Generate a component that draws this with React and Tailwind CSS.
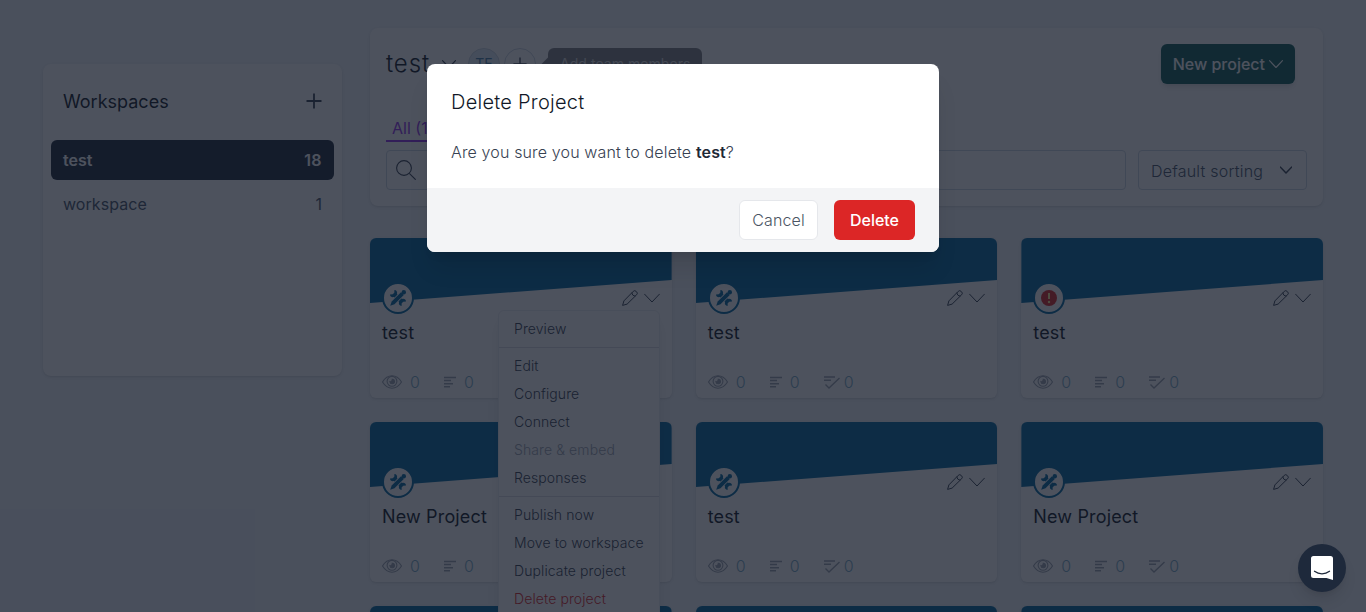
import React from "react";

const projects = [
  { name: "test", menu: true },
  { name: "test" },
  { name: "test", alert: true },
  { name: "New Project" },
  { name: "test" },
  { name: "New Project" },
  { name: "test" },
  { name: "test" },
  { name: "test" },
];

const menuGroups = [
  [{ label: "Preview" }],
  [
    { label: "Edit" },
    { label: "Configure" },
    { label: "Connect" },
    { label: "Share & embed", tone: "text-[#9ca3af]" },
    { label: "Responses" },
  ],
  [
    { label: "Publish now" },
    { label: "Move to workspace" },
    { label: "Duplicate project" },
    { label: "Delete project", tone: "text-[#dc2626]" },
  ],
];

function Chevron({ className, width = 1 }) {
  return (
    <svg className={className} viewBox="0 0 16 16" fill="none" stroke="currentColor" strokeWidth={width} strokeLinecap="round" strokeLinejoin="round">
      <path d="M.6 4.2 8 12 15.4 4.2" />
    </svg>
  );
}

function Plus({ className, width = 2 }) {
  return (
    <svg className={className} viewBox="0 0 16 16" fill="none" stroke="currentColor" strokeWidth={width}>
      <path d="M8 .5v15M.5 8h15" />
    </svg>
  );
}

function Pencil() {
  return (
    <svg className="size-4" viewBox="0 0 16 16" fill="none" stroke="currentColor" strokeWidth="1" strokeLinejoin="round">
      <path d="M.6 15.4 1.900 10.900 11.200 1.400a2.100 2.100 0 0 1 3 0l.4.4a2.100 2.100 0 0 1 0 3L5.100 14.100.6 15.400ZM10.200 2.400a2.700 2.700 0 0 0 3.400 3.400" />
    </svg>
  );
}

function Tools() {
  return (
    <svg className="size-4" viewBox="0 0 16 16" fill="currentColor">
      <path d="M4.400 0 4.300 2.700 2.700 4.300 0 4.400C0 6.500 1.900 7.600 3.900 7L9 12.100C8.400 14.100 9.500 16 11.600 16L11.700 13.300 13.300 11.700 16 11.600C16 9.500 14.100 8.400 12.100 9L7 3.900C7.600 1.900 6.500 0 4.400 0Z" />
      <path d="M11 2.200 13.800 5 4.500 14.300.2 15.800 1.700 11.500Z" stroke="#fff" strokeWidth="1.600" paintOrder="stroke" />
      <circle cx="13.800" cy="2.200" r="2.200" />
    </svg>
  );
}

function Alert() {
  return (
    <svg className="size-4" viewBox="0 0 16 16">
      <circle cx="8" cy="8" r="8" fill="#dc2626" />
      <path d="M8 3v6" stroke="#fde68a" strokeWidth="2" />
      <circle cx="8" cy="12" r="1.200" fill="#fde68a" />
    </svg>
  );
}

function Eye() {
  return (
    <svg className="h-3.5 w-5" viewBox="0 0 20 14" fill="none" stroke="currentColor" strokeWidth="1.1">
      <path d="M.5 7C3 3 6.200.8 10 .8S17 3 19.500 7C17 11 13.800 13.200 10 13.200S3 11 .5 7Z" />
      <circle cx="10" cy="6.300" r="4.900" />
      <path d="M10.300 4.200a2.300 2.300 0 1 1-2.400 2.500c.8.500 2.300-.3 2.400-2.500Z" fill="currentColor" />
    </svg>
  );
}

function Lines() {
  return (
    <svg className="h-3 w-3" viewBox="0 0 12 12" stroke="currentColor" strokeWidth="1.500">
      <path d="M0 1.500h12M0 4.600h7M0 7.700h9M0 10.800h6" />
    </svg>
  );
}

function Checklist() {
  return (
    <svg className="h-3.5 w-4" viewBox="0 0 16 14" fill="none" stroke="currentColor" strokeWidth="1.400">
      <path d="M0 2h11M0 5.200h7M1.500 9.500 5 13 15.500 3" />
    </svg>
  );
}

function ProjectMenu() {
  return (
    <div className="absolute left-32 top-[72px] z-10 w-[162px] rounded-md border border-[#eceef1] bg-white text-sm leading-5 text-[#374151] shadow-lg">
      {menuGroups.map((group, i) => (
        <div key={i} className={i ? "border-t border-[#d9dce1] py-1" : "py-1"}>
          {group.map((item) => (
            <div key={item.label} className={`whitespace-nowrap py-1 pl-[15px] font-light tracking-[0.1px] ${item.tone || ""}`}>
              {item.label}
            </div>
          ))}
        </div>
      ))}
    </div>
  );
}

function ProjectCard({ project }) {
  return (
    <div className="relative h-40 rounded-md bg-white shadow">
      <div className="h-[65px] rounded-t-md bg-[#0369a1] [clip-path:polygon(0_0,100%_0,100%_42px,0_100%)]" />
      <div className="relative -mt-[21px] flex items-center px-3">
        <div className="flex size-8 items-center justify-center rounded-full border-2 border-[#0369a1] bg-white text-[#0369a1]">
          {project.alert ? <Alert /> : <Tools />}
        </div>
        <div className="ml-auto flex items-center gap-1.5 text-[#374151]">
          <Pencil />
          <Chevron className="size-4" />
        </div>
      </div>
      <div className="mt-1.5 px-3 text-lg leading-[26px] tracking-[0.15px] text-[#111827]">{project.name}</div>
      <div className="mt-6 flex h-6 items-center px-3 font-light text-[#7dadc6]">
        <span className="text-[#9ca3af]"><Eye /></span>
        <span className="ml-2 w-[26px]">0</span>
        <span className="ml-2 text-[#9ca3af]"><Lines /></span>
        <span className="ml-2 w-[26px]">0</span>
        <span className="ml-2 text-[#9ca3af]"><Checklist /></span>
        <span className="ml-1">0</span>
      </div>
      {project.menu && <ProjectMenu />}
    </div>
  );
}

function Sidebar() {
  return (
    <aside className="mt-9 h-[312px] w-[299px] shrink-0 rounded-lg bg-white px-2 pt-5 text-[#475569] shadow">
      <div className="flex h-9 items-center justify-between px-3">
        <h2 className="text-lg text-[#111827]">Workspaces</h2>
        <Plus className="mb-0.5 size-4 text-[#374151]" width={1.8} />
      </div>
      <div className="mt-5 flex h-10 items-center justify-between rounded-md bg-[#1e293b] px-3 font-semibold text-white">
        <span>test</span><span className="tracking-wide">18</span>
      </div>
      <div className="mt-1 flex h-10 items-center justify-between px-3 tracking-[0.06px]">
        <span>workspace</span><span>1</span>
      </div>
    </aside>
  );
}

function Header() {
  return (
    <header className="h-[178px] rounded-lg bg-white px-4 pt-4 shadow">
      <div className="flex h-10 items-center">
        <h1 className="w-11 text-2xl font-light tracking-[0.9px] text-[#111827]">test</h1>
        <Chevron className="ml-3 size-3.5 text-[#374151]" width={1.4} />
        <div className="ml-3 flex size-8 items-center justify-center rounded-full border border-[#cbd5e1] bg-[#e0ecf6] text-sm text-[#4a80a8]">TE</div>
        <div className="ml-1 flex size-8 items-center justify-center rounded-full border border-[#cbd5e1] text-[#374151]">
          <Plus className="size-3.5" width={1.5} />
        </div>
        <div className="relative ml-3 flex h-8 w-[154px] items-center rounded-md bg-[#808084] px-3 text-sm tracking-[0.05px] text-[#d8d8d8]">
          <span className="absolute -left-1 size-3 rotate-45 bg-[#808084]" />
          <span className="relative whitespace-nowrap">Add team members</span>
        </div>
        <button className="ml-auto mr-3 flex h-10 items-center gap-1 rounded-md bg-[#115e59] px-3 font-medium text-white shadow-md">
          New project <Chevron className="size-3.5" width={1.3} />
        </button>
      </div>
      <div className="mt-7 flex">
        <div className="h-[30px] border-b-2 border-[#9333ea] px-1.5 pt-1 text-[#9333ea]">All (18)</div>
      </div>
      <div className="mt-2 flex gap-3">
        <div className="flex h-10 flex-1 items-center rounded border border-[#cbd5e1] px-[9px]">
          <svg className="size-5 text-[#374151]" viewBox="0 0 20 20" fill="none" stroke="currentColor" strokeWidth="1.100">
            <circle cx="8" cy="8" r="7.400" /><path d="m13.300 13.300 6.400 6.400" />
          </svg>
        </div>
        <div className="flex h-10 w-[169px] items-center justify-between rounded border border-[#cbd5e1] pl-3 pr-3.5 font-light tracking-[0.22px] text-[#475569]">
          <span className="pt-0.5">Default sorting</span>
          <Chevron className="size-3 text-[#374151]" width={2} />
        </div>
      </div>
    </header>
  );
}

function DeleteDialog() {
  return (
    <div className="absolute inset-0 z-30 flex items-start justify-center bg-[#111827]/75 pt-16">
      <div role="dialog" className="w-lg overflow-hidden rounded-lg bg-white shadow-xl">
        <div className="h-31 px-6 pt-6">
          <h3 className="text-xl leading-7 font-light tracking-[0.25px] text-[#111827]">Delete Project</h3>
          <p className="mt-6 font-light tracking-[0.14px] text-[#374151]">
            Are you sure you want to delete <b className="font-semibold text-[#1f2937]">test</b>?
          </p>
        </div>
        <div className="flex h-16 items-center justify-end gap-4 bg-[#f3f4f6] px-6">
          <button className="h-10 rounded-md border border-[#e5e7eb] bg-white px-3 font-light tracking-[0.15px] text-[#4b5563]">Cancel</button>
          <button className="h-10 rounded-md bg-[#dc2626] px-4 font-medium text-white">Delete</button>
        </div>
      </div>
    </div>
  );
}

function ChatLauncher() {
  return (
    <div className="absolute bottom-5 right-5 z-40 flex size-12 items-center justify-center rounded-full bg-[#1e293b] shadow-lg">
      <svg className="h-6 w-[22px]" viewBox="0 0 22 24">
        <path d="M2.500 0h17A2.500 2.500 0 0 1 22 2.500V24l-6.500-2H2.500A2.500 2.500 0 0 1 0 19.500v-17A2.500 2.500 0 0 1 2.500 0Z" fill="#fff" />
        <path d="M3.500 15.300c4.500 3.300 10.500 3.300 15 0" fill="none" stroke="#1e293b" strokeWidth="1.300" strokeLinecap="round" />
      </svg>
    </div>
  );
}

export default function App() {
  return (
    <div className="relative h-[612px] overflow-hidden bg-[#f1f5f9] font-['Inter',sans-serif] text-base">
      <div className="mx-auto flex w-[1280px] gap-7 pt-7">
        <Sidebar />
        <main className="min-w-0 flex-1">
          <Header />
          <div className="mt-8 grid grid-cols-3 gap-6">
            {projects.map((p, i) => <ProjectCard key={i} project={p} />)}
          </div>
        </main>
      </div>
      <DeleteDialog />
      <ChatLauncher />
    </div>
  );
}
